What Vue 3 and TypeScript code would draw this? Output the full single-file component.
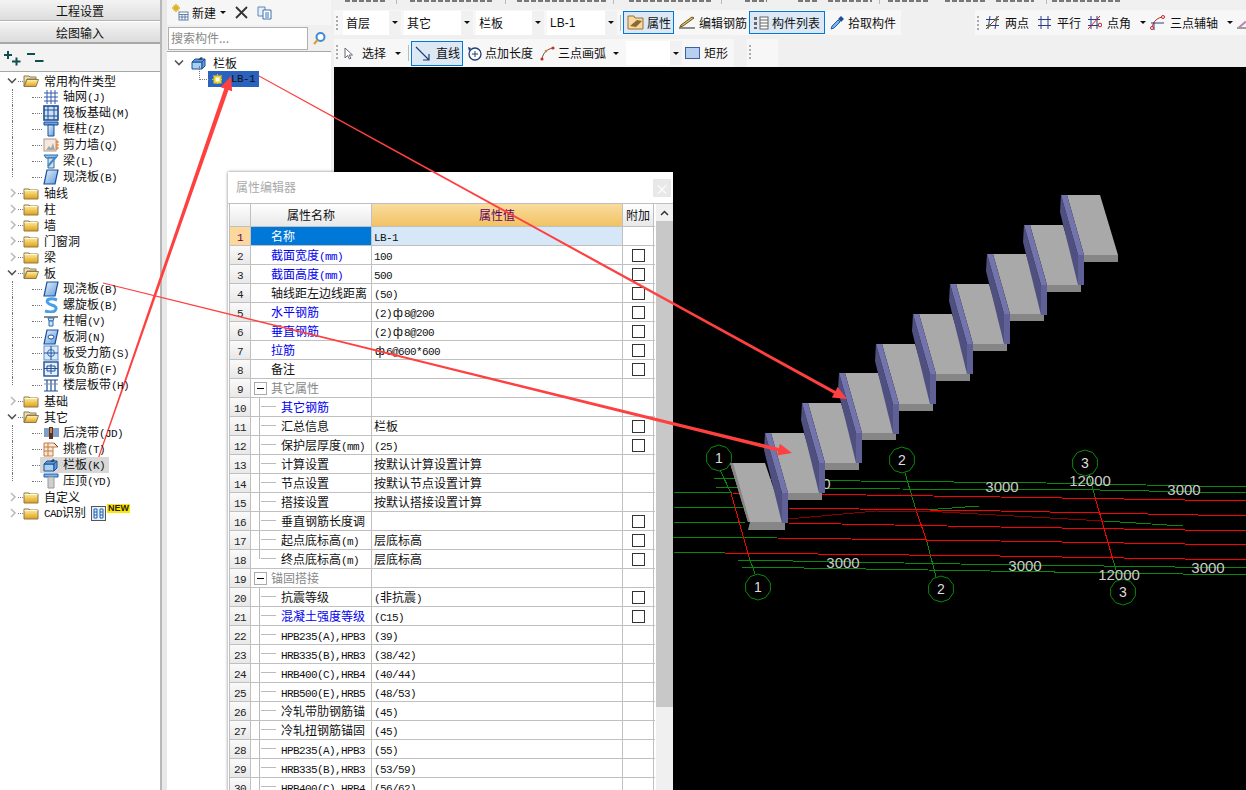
<script setup lang="ts">
import { h } from 'vue'
import type { FunctionalComponent } from 'vue'

// Latin glyphs of the reference's bitmap font are half an ideograph wide.
const T: FunctionalComponent<{ t: string }> = (p) => {
  const parts = p.t.match(/ф|[\x20-\x7e]+|[^\x20-\x7eф]+/g) ?? []
  return parts.map((s) => h('span', { class: s === 'ф' ? 'phi' : /^[\x20-\x7e]/.test(s) ? 'lat' : 'cjk' }, s))
}

interface TreeRow { label: string; icon: string; kind: 'open' | 'closed' | 'child' | 'last'; sel?: boolean }
const tree: TreeRow[] = [
  { label: '常用构件类型', icon: 'folderOpen', kind: 'open' },
  { label: '轴网(J)', icon: 'grid', kind: 'child' },
  { label: '筏板基础(M)', icon: 'raft', kind: 'child' },
  { label: '框柱(Z)', icon: 'col', kind: 'child' },
  { label: '剪力墙(Q)', icon: 'wall', kind: 'child' },
  { label: '梁(L)', icon: 'beam', kind: 'child' },
  { label: '现浇板(B)', icon: 'slab', kind: 'last' },
  { label: '轴线', icon: 'folder', kind: 'closed' },
  { label: '柱', icon: 'folder', kind: 'closed' },
  { label: '墙', icon: 'folder', kind: 'closed' },
  { label: '门窗洞', icon: 'folder', kind: 'closed' },
  { label: '梁', icon: 'folder', kind: 'closed' },
  { label: '板', icon: 'folderOpen', kind: 'open' },
  { label: '现浇板(B)', icon: 'slab', kind: 'child' },
  { label: '螺旋板(B)', icon: 'spiral', kind: 'child' },
  { label: '柱帽(V)', icon: 'cap', kind: 'child' },
  { label: '板洞(N)', icon: 'hole', kind: 'child' },
  { label: '板受力筋(S)', icon: 'rebarA', kind: 'child' },
  { label: '板负筋(F)', icon: 'rebarB', kind: 'child' },
  { label: '楼层板带(H)', icon: 'band', kind: 'last' },
  { label: '基础', icon: 'folder', kind: 'closed' },
  { label: '其它', icon: 'folderOpen', kind: 'open' },
  { label: '后浇带(JD)', icon: 'pour', kind: 'child' },
  { label: '挑檐(T)', icon: 'eave', kind: 'child' },
  { label: '栏板(K)', icon: 'parapet', kind: 'child', sel: true },
  { label: '压顶(YD)', icon: 'coping', kind: 'last' },
  { label: '自定义', icon: 'folder', kind: 'closed' },
  { label: 'CAD识别', icon: 'folder', kind: 'closed' },
]

interface Prop { name: string; value?: string; blue?: boolean; check?: boolean; type?: 'top' | 'group' | 'sub' | 'end' }
const props_: Prop[] = [
  { name: '名称', value: 'LB-1' },
  { name: '截面宽度(mm)', value: '100', blue: true, check: true },
  { name: '截面高度(mm)', value: '500', blue: true, check: true },
  { name: '轴线距左边线距离', value: '(50)', check: true },
  { name: '水平钢筋', value: '(2)ф8@200', blue: true, check: true },
  { name: '垂直钢筋', value: '(2)ф8@200', blue: true, check: true },
  { name: '拉筋', value: 'ф6@600*600', blue: true, check: true },
  { name: '备注', check: true },
  { name: '其它属性', type: 'group' },
  { name: '其它钢筋', blue: true, type: 'sub' },
  { name: '汇总信息', value: '栏板', check: true, type: 'sub' },
  { name: '保护层厚度(mm)', value: '(25)', check: true, type: 'sub' },
  { name: '计算设置', value: '按默认计算设置计算', type: 'sub' },
  { name: '节点设置', value: '按默认节点设置计算', type: 'sub' },
  { name: '搭接设置', value: '按默认搭接设置计算', type: 'sub' },
  { name: '垂直钢筋长度调', check: true, type: 'sub' },
  { name: '起点底标高(m)', value: '层底标高', check: true, type: 'sub' },
  { name: '终点底标高(m)', value: '层底标高', check: true, type: 'end' },
  { name: '锚固搭接', type: 'group' },
  { name: '抗震等级', value: '(非抗震)', check: true, type: 'sub' },
  { name: '混凝土强度等级', value: '(C15)', blue: true, check: true, type: 'sub' },
  { name: 'HPB235(A),HPB3', value: '(39)', type: 'sub' },
  { name: 'HRB335(B),HRB3', value: '(38/42)', type: 'sub' },
  { name: 'HRB400(C),HRB4', value: '(40/44)', type: 'sub' },
  { name: 'HRB500(E),HRB5', value: '(48/53)', type: 'sub' },
  { name: '冷轧带肋钢筋锚', value: '(45)', type: 'sub' },
  { name: '冷轧扭钢筋锚固', value: '(45)', type: 'sub' },
  { name: 'HPB235(A),HPB3', value: '(55)', type: 'sub' },
  { name: 'HRB335(B),HRB3', value: '(53/59)', type: 'sub' },
  { name: 'HRB400(C),HRB4', value: '(56/62)', type: 'sub' },
]

// The toolbar row above is cut off by the window edge: only feet of its content show.
const fragSpans = [
  [345, 385, 0], [396, 397, 1], [410, 494, 0], [505, 506, 1], [517, 606, 0], [613, 614, 1],
  [629, 711, 0], [721, 722, 1], [745, 767, 0], [798, 818, 0], [828, 872, 0], [879, 880, 1],
  [888, 928, 0], [945, 985, 0], [996, 1034, 0], [1046, 1047, 1], [1052, 1120, 0],
]
const frags = fragSpans.map(([a, b, sep], i) => ({
  sep: sep === 1,
  style: { marginLeft: `${a - (i ? fragSpans[i - 1][1] : 334)}px`, width: `${b - a}px` },
}))

// Stair geometry, in page coordinates; the origin of the canvas svg is the page.
const pts = (a: number[][], dx = 0, dy = 0) => a.map(([x, y]) => `${x + dx},${y + dy}`).join(' ')
const dys = [0, 30, 59, 89, 119, 149, 178, 208, 238]
const steps = dys
  .map((dy, i) => {
    const dx = -37 * i
    return {
      top: pts([[1067, 195], [1100, 195], [1118, 255], [1084, 255]], dx, dy),
      front: pts([[1084, 255], [1118, 255], [1118, 262], [1084, 262]], dx, dy),
      dark: pts([[1061, 195], [1078, 255], [1078, 285], [1060, 212]], dx, dy),
      strip: pts([[1061, 195], [1067, 195], [1084, 255], [1078, 255]], dx, dy),
      side: pts([[1078, 255], [1084, 255], [1084, 285], [1078, 285]], dx, dy),
    }
  })
  .reverse()

const greens = [
  '713,478 860,481 1046,483 1246,487',
  '715,487 900,489 1100,490 1246,493',
  '673,492 732,493',
  '673,507 743,508',
  '673,522 745,523',
  '673,537 777,538',
  '673,552 725,553',
  '737,560 960,564 1246,568',
  '741,567 990,571 1246,575',
  '925,510 979,506',
  '1104,521 1183,526',
  '720,470 731,493',
  '749,557 755,574',
  '905,473 916,510',
  '927,542 936,577',
  '1089,475 1095,497',
  '1113,560 1117,573',
]
const reds = [
  '732,493 1000,497 1246,501',
  '788,508 1000,511 1246,516',
  '788,523 1000,527 1246,531',
  '777,538 1000,541 1246,545',
  '725,553 1000,556 1246,560',
  '731,493 749,557',
  '916,510 927,542',
  '1095,497 1113,560',
]
const poly = (cx: number, cy: number, r: number, n = 10) =>
  Array.from({ length: n }, (_, k) => {
    const a = (Math.PI * 2 * k) / n + 0.3
    return `${(cx + r * Math.cos(a)).toFixed(1)},${(cy + r * Math.sin(a)).toFixed(1)}`
  }).join(' ')
const circles = [
  { x: 719, y: 458, n: '1' }, { x: 902, y: 460, n: '2' }, { x: 1085, y: 463, n: '3' },
  { x: 758, y: 587, n: '1' }, { x: 941, y: 589, n: '2' }, { x: 1123, y: 592, n: '3' },
].map((c) => ({ ...c, p: poly(c.x, c.y, 13) }))
const dims = [
  { x: 843, y: 568, t: '3000' }, { x: 1025, y: 571, t: '3000' }, { x: 1208, y: 573, t: '3000' },
  { x: 1002, y: 492, t: '3000' }, { x: 1184, y: 495, t: '3000' },
  { x: 1090, y: 486, t: '12000' }, { x: 1119, y: 580, t: '12000' }, { x: 814, y: 489, t: '3000' },
]

const arrow = (x0: number, y0: number, x1: number, y1: number, w0: number, w1: number) => {
  const len = Math.hypot(x1 - x0, y1 - y0)
  const ux = (x1 - x0) / len, uy = (y1 - y0) / len
  const nx = -uy, ny = ux
  const hl = 14, hw = 6
  const bx = x1 - ux * hl, by = y1 - uy * hl
  const p = [
    [x0 + (nx * w0) / 2, y0 + (ny * w0) / 2],
    [bx + (nx * w1) / 2, by + (ny * w1) / 2],
    [bx + nx * hw, by + ny * hw],
    [x1, y1],
    [bx - nx * hw, by - ny * hw],
    [bx - (nx * w1) / 2, by - (ny * w1) / 2],
    [x0 - (nx * w0) / 2, y0 - (ny * w0) / 2],
  ]
  return p.map(([x, y]) => `${x.toFixed(1)},${y.toFixed(1)}`).join(' ')
}
const arrows = [
  arrow(259, 76, 847, 399, 0.8, 3.2),
  arrow(103, 283, 792, 453, 0.8, 3.6),
  arrow(96, 465, 231, 76, 1, 4.4),
]
</script>

<template>
  <div class="app">
    <svg class="defs" width="0" height="0">
      <defs>
        <linearGradient id="fg" x1="0" y1="0" x2="0" y2="1"><stop offset="0" stop-color="#fff3b0" /><stop offset="1" stop-color="#e0a010" /></linearGradient>
        <linearGradient id="bg" x1="0" y1="0" x2="1" y2="1"><stop offset="0" stop-color="#e8f2fb" /><stop offset="1" stop-color="#5f9bdc" /></linearGradient>
        <symbol id="folder" viewBox="0 0 16 14"><path d="M1 3h5l1 1h8v9H1z" fill="url(#fg)" stroke="#8a7a50" /><path d="M1.5 4.5h13" stroke="#fff8d0" /></symbol>
        <symbol id="folderOpen" viewBox="0 0 16 14"><path d="M1 2h5l1 1h6v2H4L1 12z" fill="#efe0b0" stroke="#8a7a50" /><path d="M4 5.500h11.500L13 12.500H1z" fill="url(#fg)" stroke="#8a7a50" /></symbol>
        <symbol id="grid" viewBox="0 0 16 16"><path d="M4 1v14M8 1v14M12 1v14M1 4h14M1 8h14M1 12h14" stroke="#3558b0" fill="none" /></symbol>
        <symbol id="raft" viewBox="0 0 16 16"><rect x="1" y="1" width="14" height="14" fill="#cfe0f4" stroke="#1c4f98" stroke-width="1.600" /><path d="M5 1v14M11 1v14M1 5h14M1 11h14" stroke="#1c4f98" /></symbol>
        <symbol id="col" viewBox="0 0 16 16"><path d="M1 1h14v3H1z" fill="#6aa2e0" stroke="#1c4f98" /><path d="M5 4h6v11H5z" fill="url(#bg)" stroke="#1c4f98" /></symbol>
        <symbol id="wall" viewBox="0 0 16 16"><rect x="1" y="2" width="12" height="12" fill="#f3e9df" stroke="#b09a88" /><path d="M3 13l3-4 2 2 2-5 2 7z" fill="#a8a8a8" /><path d="M14 3v10M13 5h3M13 8h3M13 11h3" stroke="#e07820" /></symbol>
        <symbol id="beam" viewBox="0 0 16 16"><path d="M1 2h14l-2 3H3z" fill="#8fc0ea" stroke="#2b6cb0" /><path d="M5 5h6v10H5z" fill="#dcdcdc" stroke="#2b6cb0" /><path d="M5 13L13 4" stroke="#3a8ad0" stroke-width="2" /></symbol>
        <symbol id="slab" viewBox="0 0 16 16"><path d="M4 1h11l-3 14H1z" fill="url(#bg)" stroke="#1c4f98" stroke-width="1.200" /></symbol>
        <symbol id="spiral" viewBox="0 0 16 16"><path d="M14 3C7 0 2 3 5 6s9 2 8 6-7 3-11 2" fill="none" stroke="#4aa0e8" stroke-width="3" /></symbol>
        <symbol id="cap" viewBox="0 0 16 16"><path d="M1 3h14v2H1z" fill="#888" /><path d="M5 5h6l-1 3H6z" fill="#cfe0f4" stroke="#2b6cb0" /><path d="M6 8h4v5H6z" fill="#cfe0f4" stroke="#2b6cb0" /></symbol>
        <symbol id="hole" viewBox="0 0 16 16"><path d="M4 1h11l-3 14H1z" fill="url(#bg)" stroke="#1c4f98" stroke-width="1.200" /><ellipse cx="8" cy="8" rx="3" ry="2" fill="#fff" stroke="#1c4f98" /></symbol>
        <symbol id="rebarA" viewBox="0 0 16 16"><rect x="1" y="1" width="14" height="14" fill="#dbe8f7" stroke="#5f90cc" /><path d="M1 8h14M8 1v14" stroke="#1c4f98" /><circle cx="8" cy="8" r="3.500" fill="none" stroke="#2b6cb0" /></symbol>
        <symbol id="rebarB" viewBox="0 0 16 16"><rect x="1" y="1" width="14" height="14" fill="#e6effa" stroke="#1c4f98" stroke-width="1.400" /><path d="M4 5h8v5H4zM1 7.500h14M8 3v10" fill="none" stroke="#1c4f98" /></symbol>
        <symbol id="band" viewBox="0 0 16 16"><path d="M1 3h14M1 14h14M4 3v11M8 3v11M12 3v11" stroke="#1c4f98" stroke-width="1.200" fill="none" /><path d="M1 7h14" stroke="#88a" /></symbol>
        <symbol id="pour" viewBox="0 0 16 16"><path d="M1 3h5v9H1z" fill="#7f9fc8" /><path d="M10 3h6v9h-6z" fill="#7f9fc8" /><path d="M6 2h4v12H6z" fill="#5a3018" /><path d="M7 3h2v5H7z" fill="#d08040" /></symbol>
        <symbol id="eave" viewBox="0 0 16 16"><path d="M1 2h10l4 4h-5v9H1z" fill="#f5e8d8" stroke="#c87840" /><path d="M1 6h9M1 10h9M5 2v13" stroke="#c87840" /><path d="M11 2l4 4" stroke="#444" /></symbol>
        <symbol id="parapet" viewBox="0 0 16 16"><path d="M1 7h10v7H1z" fill="#a8d0f0" stroke="#1c4f98" /><path d="M1 7l3-3h10l-3 3zM11 7l3-3v7l-3 3z" fill="#5f9bdc" stroke="#1c4f98" /><path d="M7 5l3-3 2 1-2 2" fill="#345" /></symbol>
        <symbol id="coping" viewBox="0 0 16 16"><path d="M1 1h14v3H1z" fill="#7fb0e6" stroke="#1c60b0" /><path d="M5 4h6v11H5z" fill="#cfcfcf" stroke="#999" /></symbol>
      </defs>
    </svg>

    <aside class="left">
      <div class="nav-btn nav-a">工程设置</div>
      <div class="nav-btn nav-b">绘图输入</div>
      <div class="left-tools">
        <svg width="17" height="15" viewBox="0 0 17 15"><path d="M0 4h8M4 0v8M8 10.500h8.500M12.500 6.500v8" stroke="#0f4f4c" stroke-width="2" fill="none" /></svg>
        <svg width="17" height="15" viewBox="0 0 17 15"><path d="M0 3h8M8 10h8.500" stroke="#0f4f4c" stroke-width="2" fill="none" /></svg>
      </div>
      <div class="tree">
        <div v-for="(r, i) in tree" :key="i" class="row" :class="r.kind">
          <svg v-if="r.kind === 'open'" class="chev" width="10" height="8" viewBox="0 0 10 8"><path d="M1 1.500l4 4 4-4" fill="none" stroke="#555" stroke-width="1.600" /></svg>
          <svg v-if="r.kind === 'closed'" class="chev" width="10" height="10" viewBox="0 0 10 10"><path d="M3 1l4 4-4 4" fill="none" stroke="#bbb" stroke-width="1.600" /></svg>
          <span class="hit" :class="{ sel: r.sel }">
            <svg class="ic" width="16" height="16"><use :href="'#' + r.icon" /></svg>
            <span class="lbl"><T :t="r.label" /></span>
          </span>
          <template v-if="r.label === 'CAD识别'">
            <svg class="cad" width="15" height="15" viewBox="0 0 15 15"><rect x=".5" y=".5" width="14" height="14" fill="#e6effa" stroke="#555" /><path d="M3 3h3v9H3zM9 3h3v9H9zM3 6h3M3 9h3M9 6h3M9 9h3" fill="none" stroke="#1c60b0" /></svg>
            <span class="new">NEW</span>
          </template>
        </div>
      </div>
    </aside>

    <div class="sash"></div>

    <section class="mid">
      <div class="mid-tools">
        <svg width="17" height="17" viewBox="0 0 17 17"><path d="M4 0v8M0 4h8M1.500 1.500l5 5M6.500 1.500l-5 5" stroke="#e0b020" stroke-width="1.500" /><rect x="7" y="8" width="9" height="8" fill="#fff" stroke="#5f7fa8" /><path d="M7 10.500h9M10 10.500V16M13 10.500V16M7 13h9" stroke="#5f7fa8" /></svg>
        <span class="new-btn">新建</span>
        <i class="caret"></i>
        <svg class="del" width="13" height="13" viewBox="0 0 13 13"><path d="M1 1l11 11M12 1L1 12" stroke="#333" stroke-width="1.800" /></svg>
        <svg class="cpy" width="15" height="14" viewBox="0 0 15 14"><path d="M1 1h7v9H1z" fill="#e6effa" stroke="#5f86b8" /><path d="M6 4h8v9H6z" fill="#fff" stroke="#3f70ac" /><path d="M8 7h4M8 9h4M8 11h4" stroke="#3f70ac" /></svg>
      </div>
      <div class="search">
        <div class="search-input">搜索构件...</div>
        <div class="search-btn">
          <svg width="15" height="15" viewBox="0 0 15 15"><circle cx="8.500" cy="6" r="4" fill="#fff" stroke="#3c8ad8" stroke-width="2" /><path d="M5.500 9L2 13" stroke="#e0a030" stroke-width="2.400" /></svg>
        </div>
      </div>
      <div class="comp-tree">
        <div class="comp-root">
          <svg width="10" height="8" viewBox="0 0 10 8"><path d="M1 1.500l4 4 4-4" fill="none" stroke="#555" stroke-width="1.600" /></svg>
          <svg class="ic" width="16" height="16"><use href="#parapet" /></svg>
          <span class="root-l">栏板</span>
        </div>
        <div class="comp-leaf">
          <span class="leaf-sel">
            <svg width="11" height="11" viewBox="0 0 11 11"><rect x="2.500" y="2.500" width="6" height="6" fill="#fff" stroke="#e8d020" stroke-width="2" /><path d="M5.500 0v11M0 5.500h11M1.500 1.500l8 8M9.500 1.500l-8 8" stroke="#e8d020" stroke-dasharray="1.500 7" /></svg>
            <span class="lat">LB-1</span>
          </span>
        </div>
      </div>
    </section>

    <div class="gap"></div>

    <main class="work">
      <div class="toolbars">
        <div class="clip-row">
          <span v-for="(f, i) in frags" :key="i" class="frag" :class="{ fsep: f.sep }" :style="f.style"></span>
        </div>
        <div class="tb-row r1">
          <div class="grp g-a">
            <i class="handle"></i>
            <div class="combo c1"><span>首层</span><b><i class="caret"></i></b></div>
            <div class="combo c2"><span>其它</span><b><i class="caret"></i></b></div>
            <div class="combo c3"><span>栏板</span><b><i class="caret"></i></b></div>
            <div class="combo c4"><span class="sans">LB-1</span><b><i class="caret"></i></b></div>
            <i class="sep"></i>
            <div class="btn on b-prop">
              <svg width="17" height="15" viewBox="0 0 17 15"><path d="M1 1h6l1 2h8v11H1z" fill="#f5d9a0" stroke="#a07030" /><path d="M3 11l7-6 5 1-6 6z" fill="#8a6a30" /></svg>
              <span>属性</span>
            </div>
            <div class="btn b-edit">
              <svg width="18" height="13" viewBox="0 0 18 13"><path d="M1 12h16" stroke="#222" /><path d="M2 11l3-1 11-8-2-1L3 9z" fill="#e8c060" stroke="#6a5020" /></svg>
              <span>编辑钢筋</span>
            </div>
            <div class="btn on b-list">
              <svg width="16" height="14" viewBox="0 0 16 14"><rect x="1" y="1" width="3" height="3" fill="#666" /><rect x="1" y="6" width="3" height="3" fill="#666" /><rect x="1" y="11" width="3" height="2" fill="#666" /><rect x="7" y="1" width="8" height="12" fill="#fff" stroke="#666" /><path d="M7 4h8M7 7h8M7 10h8" stroke="#666" /></svg>
              <span>构件列表</span>
            </div>
            <div class="btn b-pick">
              <svg width="15" height="15" viewBox="0 0 15 15"><path d="M1 14l1-3 6-6 2 2-6 6z" fill="#7fb0e6" stroke="#1c60b0" /><path d="M8 4l3-3 3 3-3 3z" fill="#1c4f98" /></svg>
              <span>拾取构件</span>
            </div>
          </div>
          <div class="grp g-b">
            <i class="handle"></i>
            <div class="mini m-two">
              <svg width="15" height="15" viewBox="0 0 15 15"><path d="M5 1L3 14M12 1l-2 13M1 4.500h13M1 10.500h13" stroke="#2a3f88" fill="none" /><path d="M1 14L14 1" stroke="#d02020" /><circle cx="11" cy="4.500" r="1.500" fill="#4a8a20" /><circle cx="4" cy="10.500" r="1.500" fill="#4a8a20" /></svg>
              <span>两点</span>
            </div>
            <div class="mini m-par">
              <svg width="15" height="15" viewBox="0 0 15 15"><path d="M4 1v13M11 1v13M1 4.500h13M1 10.500h13" stroke="#2a3f88" fill="none" /></svg>
              <span>平行</span>
            </div>
            <div class="mini m-ang">
              <svg width="15" height="15" viewBox="0 0 15 15"><path d="M4 1v13M10 1v13M1 4.500h12M1 10.500h12" stroke="#2a3f88" fill="none" /><path d="M1 14L13 1" stroke="#d02020" /><circle cx="13" cy="10" r="1.800" fill="#fff" stroke="#c02020" /></svg>
              <span>点角</span><i class="caret"></i>
            </div>
            <div class="mini m-arc">
              <svg width="15" height="15" viewBox="0 0 15 15"><path d="M4 15V7M1 8h13" stroke="#2a3f88" fill="none" /><path d="M2 13C3 6 8 2 14 2" stroke="#c02020" fill="none" /><circle cx="13" cy="2" r="1.500" fill="#fff" stroke="#c02020" /><circle cx="2" cy="13" r="1.500" fill="#fff" stroke="#c02020" /></svg>
              <span>三点辅轴</span><i class="caret"></i>
            </div>
            <svg class="m-end" width="10" height="12" viewBox="0 0 10 12"><path d="M0 11h10" stroke="#444" /><path d="M1 10l7-6 2 1-6 5z" fill="#c080b0" /></svg>
          </div>
        </div>
        <div class="tb-row r2">
          <div class="grp g-c">
            <i class="handle"></i>
            <div class="mini s-sel">
              <svg width="9" height="13" viewBox="0 0 9 13"><path d="M1 1v10l2.500-2.500L5.500 12l1.500-.8L5 8h3.500z" fill="#fff" stroke="#667" /></svg>
              <span>选择</span><i class="caret"></i>
            </div>
            <i class="sep"></i>
            <div class="btn on s-line">
              <svg width="15" height="15" viewBox="0 0 15 15"><path d="M1 1l13 13M14 8v6H8" stroke="#1c3f78" stroke-width="1.200" fill="none" /></svg>
              <span>直线</span>
            </div>
            <div class="mini s-len">
              <svg width="16" height="16" viewBox="0 0 16 16"><circle cx="9" cy="9" r="6" fill="#fff" stroke="#1c3f78" stroke-width="1.300" /><path d="M9 6v6M6 9h6" stroke="#1c3f78" /><path d="M2 2l3 1-2 3z" fill="#1c3f78" /></svg>
              <span>点加长度</span>
            </div>
            <div class="mini s-arc">
              <svg width="15" height="15" viewBox="0 0 15 15"><path d="M2 13C3 7 7 3 13 2" stroke="#555" fill="none" /><circle cx="2" cy="13" r="1.600" fill="#d03020" /><circle cx="13" cy="2" r="1.600" fill="#d03020" /><circle cx="6" cy="5" r="1.300" fill="#e08020" /></svg>
              <span>三点画弧</span><i class="caret"></i>
            </div>
            <div class="combo c5"><span></span><b><i class="caret"></i></b></div>
            <div class="mini s-rect">
              <svg width="15" height="12" viewBox="0 0 15 12"><rect x=".5" y=".5" width="14" height="11" fill="#b8d0f0" stroke="#3f60a8" /></svg>
              <span>矩形</span>
            </div>
          </div>
          <div class="grp g-d"><i class="handle"></i></div>
        </div>
      </div>
      <div class="canvas"></div>
    </main>

    <svg class="scene" width="1246" height="790" viewBox="0 0 1246 790">
      <polyline v-for="(p, i) in greens" :key="'g' + i" :points="p" fill="none" stroke="#0a8a0a" />
      <polyline v-for="(p, i) in reds" :key="'r' + i" :points="p" fill="none" stroke="#ff0000" />
      <polyline points="788,519 876,511 942,512 1104,521" fill="none" stroke="#8a0000" />
      <g v-for="(c, i) in circles" :key="'c' + i">
        <polygon :points="c.p" fill="#000" stroke="#0a8a0a" />
        <text :x="c.x" :y="c.y + 5" class="axis">{{ c.n }}</text>
      </g>
      <text v-for="(d, i) in dims" :key="'d' + i" :x="d.x" :y="d.y" class="dim">{{ d.t }}</text>
      <polygon points="730,463 765,463 785,522 748,522" fill="#a9a9a9" />
      <polygon points="730,463 733,463 750,522 748,530 785,530 785,522 748,522" fill="#868686" />
      <g v-for="(s, i) in steps" :key="'s' + i">
        <polygon :points="s.top" fill="#a9a9a9" />
        <polygon :points="s.front" fill="#868686" />
        <polygon :points="s.dark" fill="#4f5080" />
        <polygon :points="s.strip" fill="#7374ac" />
        <polygon :points="s.side" fill="#5f6096" />
      </g>
    </svg>

    <div class="window">
      <div class="win-title">
        <span>属性编辑器</span>
        <div class="win-close">×</div>
      </div>
      <div class="win-body">
        <div class="grid">
          <div class="tr head">
            <div class="td num"></div>
            <div class="td h-name">属性名称</div>
            <div class="td h-val">属性值</div>
            <div class="td h-ext">附加</div>
          </div>
          <div v-for="(p, i) in props_" :key="i" class="tr" :class="{ first: i === 0 }">
            <div class="td num"><span class="lat">{{ i + 1 }}</span></div>
            <div class="td name" :class="[p.type ?? 'top', { blue: p.blue }]">
              <i v-if="p.type === 'group'" class="minus"></i>
              <i v-if="p.type === 'sub' || p.type === 'end'" class="tick"></i>
              <span class="nm"><T :t="p.name" /></span>
            </div>
            <div class="td val"><T v-if="p.value" :t="p.value" /></div>
            <div class="td ext"><i v-if="p.check" class="box"></i></div>
          </div>
        </div>
        <div class="scroll">
          <div class="sc-up">
            <svg width="9" height="6" viewBox="0 0 9 6"><path d="M1 5l3.500-3.500L8 5" fill="none" stroke="#333" stroke-width="1.500" /></svg>
          </div>
          <div class="sc-thumb"></div>
        </div>
      </div>
    </div>

    <svg class="arrows" width="1246" height="790" viewBox="0 0 1246 790">
      <polygon v-for="(a, i) in arrows" :key="i" :points="a" fill="#ff4040" />
    </svg>
  </div>
</template>

<style scoped>
.app {
  position: relative;
  display: flex;
  width: 1246px;
  height: 790px;
  overflow: hidden;
  background: #f0f0f0;
  font: 12px/16px "Noto Sans CJK SC", "Liberation Sans", sans-serif;
  color: #111;
}
.defs { position: absolute; }
.left { width: 160px; flex: none; background: #fff; display: flex; flex-direction: column; }
.nav-btn {
  text-align: center;
  background: linear-gradient(#f4f4f4, #dcdcdc);
  border-bottom: 1px solid #b4b4b4;
}
.nav-a { height: 20px; line-height: 22px; }
.nav-b { height: 20px; line-height: 21px; border-bottom: 2px solid #a8a8a8; margin-top: 1px; }
.left-tools { height: 28px; display: flex; align-items: center; gap: 6px; padding: 1px 0 0 4px; background: #f3f3f3; border-bottom: 1px solid #a8a8a8; box-sizing: border-box; }
.tree { flex: 1; padding-top: 1px; }
.row { position: relative; height: 16px; display: flex; align-items: center; padding-left: 23px; }
.chev { position: absolute; left: 7px; top: 4px; }
.closed .chev { top: 3px; left: 8px; }
.row.open::before, .row.closed::before {
  content: "";
  position: absolute;
  left: 18px;
  top: 8px;
  width: 5px;
  border-top: 1px dotted #777;
}
.row.child, .row.last { padding-left: 43px; }
.row.child::before, .row.last::before {
  content: "";
  position: absolute;
  left: 12px;
  top: 0;
  height: 16px;
  border-left: 1px dotted #777;
}
.row.last::before { height: 8px; }
.row.child::after, .row.last::after {
  content: "";
  position: absolute;
  left: 32px;
  top: 8px;
  width: 10px;
  border-top: 1px dotted #777;
}
.row.child .ic, .row.last .ic { margin-right: 4px; }
.hit { display: inline-flex; align-items: center; height: 16px; position: relative; z-index: 1; }
.row.open .ic, .row.closed .ic { margin-right: 5px; }
.sel { background: #d8d8d8; margin-left: -3px; padding: 0 4px 0 3px; }
.lbl { white-space: nowrap; }
.cad { margin-left: 5px; }
.new { font: bold 9px/9px "Liberation Sans", sans-serif; background: #ffe600; color: #222; padding: 0 1px; margin: -10px 0 0 1px; }
.sash { width: 7px; flex: none; background: linear-gradient(90deg, #b8b8b8 0, #b8b8b8 2px, #e8e8e8 2px, #e8e8e8 100%); }
.mid { width: 164px; flex: none; display: flex; flex-direction: column; background: #f0f0f0; }
.mid-tools { height: 25px; display: flex; align-items: center; padding-left: 5px; background: #f6f6f6; box-sizing: border-box; }
.new-btn { margin-left: 3px; }
.mid-tools .caret { margin-left: 4px; }
.del { margin-left: 9px; }
.cpy { margin-left: 9px; }
.search { height: 26px; display: flex; padding: 2px 3px 1px 1px; box-sizing: border-box; gap: 3px; }
.search-input { width: 136px; border: 1px solid #b0b0b0; background: #fff; color: #888; padding-left: 2px; line-height: 20px; flex: none; box-sizing: content-box; height: 21px; }
.search-btn { flex: 1; display: flex; align-items: center; justify-content: center; }
.comp-tree { flex: 1; background: #fff; border: 1px solid #a8a8a8; border-width: 1px 0 0 0; }
.comp-root { height: 18px; display: flex; align-items: center; padding: 2px 0 0 7px; box-sizing: content-box; }
.comp-root .ic { margin-left: 7px; }
.root-l { margin-left: 6px; }
.comp-leaf { position: relative; padding-left: 41px; height: 16px; margin-top: -1px; }
.comp-leaf::before { content: ""; position: absolute; left: 32px; top: -5px; height: 13px; width: 9px; border-left: 1px dotted #777; border-bottom: 1px dotted #777; }
.leaf-sel { display: flex; align-items: center; height: 16px; width: 51px; background: #2a62c0; color: #111; padding-left: 4px; gap: 8px; box-sizing: border-box; }
.gap { width: 3px; flex: none; background: #f0f0f0; }
.work { flex: 1; display: flex; flex-direction: column; min-width: 0; }
.toolbars { height: 67px; flex: none; display: flex; flex-direction: column; background: #f0f0f0; }
.clip-row { height: 4px; display: flex; align-items: flex-start; overflow: hidden; }
.frag { height: 2px; flex: none; background: repeating-linear-gradient(90deg, #444 0 5px, transparent 5px 7px); opacity: .7; }
.fsep { height: 4px; background: #b8b8b8; opacity: 1; }
.tb-row { display: flex; }
.r1 { height: 25px; margin-top: 6px; }
.r2 { height: 28px; margin-top: 4px; }
.grp { display: flex; align-items: center; background: #f7f7f7; height: 100%; position: relative; }
.g-a { width: 567px; padding-left: 9px; box-sizing: border-box; }
.g-b { margin-left: 74px; flex: 1; padding-left: 10px; }
.g-c { width: 400px; padding-left: 10px; box-sizing: border-box; }
.g-d { width: 31px; margin-left: 13px; }
.handle { position: absolute; left: 2px; top: 6px; height: 14px; width: 2px; background: repeating-linear-gradient(#aaa 0 2px, transparent 2px 4px); }
.sep { width: 1px; height: 16px; background: #bbb; margin: 0 2px 0 3px; flex: none; }
.caret { display: inline-block; width: 0; height: 0; border: 3px solid transparent; border-top: 3px solid #111; border-bottom: 0; flex: none; }
.combo { display: flex; height: 24px; background: #fff; align-items: center; flex: none; margin-right: 3px; box-sizing: border-box; padding-left: 3px; line-height: 24px; }
.combo span { flex: 1; white-space: nowrap; }
.combo b { width: 12px; height: 100%; background: #f1f1f1; display: flex; align-items: center; justify-content: center; }
.sans { font-family: "Liberation Sans", sans-serif; }
.c1 { width: 58px; } .c2 { width: 69px; } .c3 { width: 68px; } .c4 { width: 70px; margin-right: 0; }
.c5 { width: 56px; margin-left: 5px; margin-right: 3px; }
.btn, .mini { display: flex; align-items: center; gap: 3px; flex: none; box-sizing: border-box; white-space: nowrap; }
.btn { height: 23px; padding-left: 3px; border: 1px solid transparent; }
.btn.on { background: #dce9f5; border: 1px solid #0078d7; }
.b-prop { width: 51px; } .b-edit { width: 71px; margin-left: 3px; padding-left: 0; }
.b-list { width: 76px; margin-left: 1px; } .b-pick { width: 72px; margin-left: 4px; padding-left: 0; }
.mini { gap: 5px; }
.mini .caret { margin-left: 4px; }
.m-two { width: 52px; } .m-par { width: 50px; } .m-ang { width: 63px; } .m-arc { width: 87px; }
.s-sel { width: 61px; padding-left: 0; gap: 9px; }
.s-sel .caret { margin-left: 0; }
.s-line { width: 52px; height: 25px; gap: 6px; padding-left: 3px; }
.s-len { width: 70px; margin-left: 3px; gap: 3px; }
.s-arc { width: 81px; gap: 3px; margin-left: 4px; }
.s-rect { gap: 4px; }
.canvas { flex: 1; background: #000; }
.scene { position: absolute; left: 0; top: 0; pointer-events: none; }
.scene polyline { shape-rendering: crispEdges; }
.axis { font: 14px "Liberation Sans", sans-serif; fill: #ddd; text-anchor: middle; }
.dim { font: 15px "Liberation Sans", sans-serif; fill: #ccc; text-anchor: middle; }
.window {
  position: absolute;
  left: 228px;
  top: 172px;
  width: 445px;
  height: 640px;
  background: #fff;
  box-shadow: 0 0 3px rgba(0, 0, 0, .5);
}
.win-title { height: 31px; position: relative; color: #aaa; line-height: 29px; padding-left: 8px; }
.win-close { position: absolute; right: 2px; top: 7px; width: 18px; height: 18px; background: #e8e8e8; color: #fff; text-align: center; line-height: 18px; font-size: 14px; }
.win-body { display: flex; padding-left: 1px; border-top: 1px solid #c0c0c0; }
.grid { width: 425px; flex: none; border-left: 1px solid #c0c0c0; }
.tr { display: grid; grid-template-columns: 21px 121px 251px 31px; height: 19px; box-sizing: border-box; border-bottom: 1px solid #c0c0c0; }
.tr.head { height: 23px; }
.td { border-right: 1px solid #c0c0c0; white-space: nowrap; overflow: hidden; line-height: 18px; box-sizing: border-box; position: relative; }
.num { background: linear-gradient(#fafafa, #e8e8e8); text-align: center; color: #222; }
.first .num { background: #fcd89c; color: #600050; }
.h-name, .h-ext { text-align: center; line-height: 22px; background: linear-gradient(#fff, #e8e8e8); }
.head .num { background: linear-gradient(#fff, #e8e8e8); }
.h-val { text-align: center; line-height: 22px; color: #600060; background: linear-gradient(#f9dc9e, #f2c264); }
.name { padding-left: 20px; }
.name.sub, .name.end { padding-left: 30px; }
.name.blue { color: #0000ee; }
.first .name { background: #0078d7; color: #fff; }
.first .val { background: #d6e8f7; }
.name.group { color: #888; }
.val { padding-left: 2px; }
.ext { display: flex; align-items: center; justify-content: center; }
.box { width: 11px; height: 11px; border: 1px solid #333; background: #fff; display: block; }
.minus { position: absolute; left: 3px; top: 3px; width: 11px; height: 11px; border: 1px solid #aaa; box-sizing: content-box; background: linear-gradient(#000, #000) center/7px 1px no-repeat; z-index: 1; }
.tick { position: absolute; left: 8px; top: 0; bottom: 0; width: 16px; border-left: 1px solid #bbb; background: linear-gradient(#bbb, #bbb) 1px 8px/15px 1px no-repeat; }
.name.end .tick { bottom: 9px; }
.scroll { width: 17px; margin-left: 1px; background: #f0f0f0; }
.sc-up { height: 17px; display: flex; align-items: center; justify-content: center; }
.sc-thumb { height: 486px; background: #c8c8c8; }
.arrows { position: absolute; left: 0; top: 0; pointer-events: none; }
</style>

<style>
.lat { font-family: "Liberation Mono", monospace; font-size: 11px; letter-spacing: -.6px; }
.phi { display: inline-block; width: 12px; text-align: center; font-family: "Liberation Sans", sans-serif; }
</style>
